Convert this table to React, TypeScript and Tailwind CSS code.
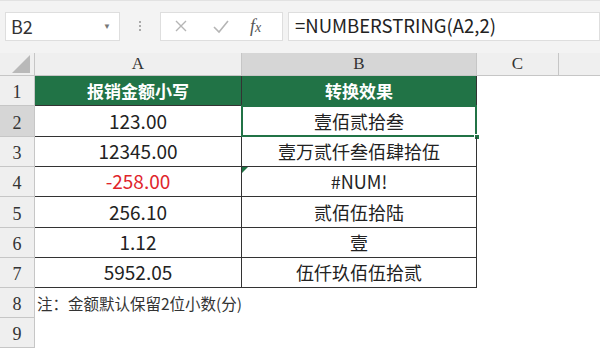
import type { ReactNode } from 'react'

const cjk = "font-['Microsoft_YaHei','Noto_Sans_CJK_SC',sans-serif]"
const serif = "font-['Liberation_Serif','Noto_Serif',serif]"

type Row = { n: number; h: string; a?: ReactNode; b?: ReactNode; aRed?: boolean; head?: boolean; note?: boolean; errFlag?: boolean }

const rows: Row[] = [
  { n: 1, h: 'h-[30px]', a: '报销金额小写', b: '转换效果', head: true },
  { n: 2, h: 'h-[31px]', a: '123.00', b: '壹佰贰拾叁' },
  { n: 3, h: 'h-[30px]', a: '12345.00', b: '壹万贰仟叁佰肆拾伍' },
  { n: 4, h: 'h-[30px]', a: '-258.00', b: '#NUM!', aRed: true, errFlag: true },
  { n: 5, h: 'h-[31px]', a: '256.10', b: '贰佰伍拾陆' },
  { n: 6, h: 'h-[30px]', a: '1.12', b: '壹' },
  { n: 7, h: 'h-[30px]', a: '5952.05', b: '伍仟玖佰伍拾贰' },
  { n: 8, h: 'h-[30px]', note: true },
  { n: 9, h: 'h-[30px]' },
]

function FormulaBar() {
  return (
    <div className="flex h-[53px] items-center gap-[5px] border-t border-[#e2e2e2] bg-[#f3f3f3] pl-[5px] pb-[2px]">
      <div className="flex h-[29px] w-[115px] items-center justify-between border border-[#dedede] bg-white pl-[5px] pr-[8px]">
        <span className={`${cjk} text-[18px] text-[#333]`}>B2</span>
        <span className="text-[8px] text-[#777]">▼</span>
      </div>
      <div className="flex w-[30px] flex-col items-center gap-[2px]">
        <span className="size-[2px] bg-[#aaa]" />
        <span className="size-[2px] bg-[#aaa]" />
        <span className="size-[2px] bg-[#aaa]" />
      </div>
      <div className="flex h-[29px] w-[123px] items-center border border-[#dedede] bg-white">
        <svg width="40" height="29" viewBox="0 0 40 29" className="shrink-0">
          <path d="M15 9 L25 19 M25 9 L15 19" stroke="#b5b5b5" strokeWidth="1.4" fill="none" />
        </svg>
        <svg width="40" height="29" viewBox="0 0 40 29" className="shrink-0">
          <path d="M13 15 L18 20 L27 9" stroke="#b5b5b5" strokeWidth="1.6" fill="none" />
        </svg>
        <span className={`${serif} ml-[9px] text-[18px] italic text-[#555]`}>
          f<span className="text-[14px]">x</span>
        </span>
      </div>
      <div className="flex h-[29px] flex-1 items-center border border-[#dedede] bg-white pl-[6px]">
        <span className={`${cjk} text-[18.5px] text-[#222]`}>=NUMBERSTRING(A2,2)</span>
      </div>
    </div>
  )
}

function ColumnHeaders() {
  return (
    <div className="flex h-[23px] border-b border-[#c6c6c6] bg-[#efefef]">
      <div className="relative w-[35px] shrink-0 border-r border-[#c6c6c6]">
        <svg width="20" height="18" viewBox="0 0 20 18" className="absolute right-[2px] bottom-[2px]">
          <path d="M18 0 L18 18 L0 18 Z" fill="#b9b9b9" />
        </svg>
      </div>
      <div className={`${serif} flex w-[207px] shrink-0 items-end justify-center border-r border-[#c6c6c6] text-[17px] leading-[22px] text-[#333]`}>A</div>
      <div className={`${serif} flex w-[235px] shrink-0 items-end justify-center border-r border-[#c6c6c6] bg-[#d6d6d6] text-[17px] leading-[22px] text-[#333]`}>B</div>
      <div className={`${serif} flex w-[82px] shrink-0 items-end justify-center border-r border-[#c6c6c6] text-[17px] leading-[22px] text-[#333]`}>C</div>
      <div className="flex-1" />
    </div>
  )
}

function SheetRow({ row }: { row: Row }) {
  const selected = row.n === 2
  const inTable = row.n <= 7
  const line = inTable ? 'border-b border-r border-[#333]' : ''
  return (
    <div className={`flex ${row.h}`}>
      <div className={`${serif} flex w-[35px] shrink-0 items-end justify-center border-r border-b border-[#c6c6c6] text-[18px] leading-[26px] text-[#333] ${selected ? 'bg-[#d6d6d6]' : 'bg-[#efefef]'}`}>
        {row.n}
      </div>
      <div className={`${cjk} relative flex w-[207px] shrink-0 items-center justify-center ${line} ${row.head ? 'bg-[#217346] text-[17px] font-bold text-white' : 'text-[19px]'} ${row.aRed ? 'text-[#e0252b]' : 'text-[#222]'}`}>
        {row.note ? (
          <span className="absolute top-[4px] left-[2px] whitespace-nowrap text-[15.5px] text-[#333]">注：金额默认保留2位小数(分)</span>
        ) : (
          <span className={row.head ? 'text-white' : ''}>{row.a}</span>
        )}
      </div>
      <div className={`${cjk} relative flex w-[235px] shrink-0 items-center justify-center ${line} ${row.head ? 'bg-[#217346] text-[17px] font-bold text-white' : 'text-[18px] text-[#222]'}`}>
        {row.b}
        {row.errFlag && (
          <svg width="6" height="6" viewBox="0 0 6 6" className="absolute top-0 left-0">
            <path d="M0 0 L6 0 L0 6 Z" fill="#217346" />
          </svg>
        )}
        {selected && (
          <>
            <div className="pointer-events-none absolute -top-[1px] -left-[1px] -right-[1px] -bottom-[1px] border-2 border-[#217346]" />
            <div className="absolute -right-[4px] -bottom-[4px] size-[6px] border border-white bg-[#217346]" />
          </>
        )}
      </div>
      <div className="flex-1" />
    </div>
  )
}

export default function App() {
  return (
    <div className="h-[349px] w-[600px] overflow-hidden bg-white">
      <FormulaBar />
      <ColumnHeaders />
      {rows.map((row) => (
        <SheetRow key={row.n} row={row} />
      ))}
    </div>
  )
}
